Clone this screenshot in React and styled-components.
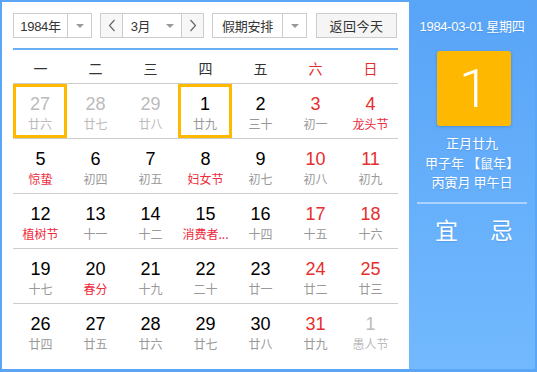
import React from 'react';
import styled, { createGlobalStyle } from 'styled-components';

const GlobalStyle = createGlobalStyle`
	body {
		margin: 0;
		font-family: 'Liberation Sans', 'Noto Sans CJK SC', sans-serif;
	}
`;

const Frame = styled.div`
	display: flex;
	width: 537px;
	height: 372px;
	box-sizing: border-box;
	border: 2px solid #5aa5f6;
	border-bottom-width: 3px;
`;

const Main = styled.div`
	width: 407px;
	padding: 11px 11px 0;
	box-sizing: border-box;
	background: #fff;
`;

const Toolbar = styled.div`
	display: flex;
	height: 25px;
	font-family: 'Noto Sans CJK SC', sans-serif;
	font-size: 13px;
	color: #333;
`;

const Select = styled.div`
	display: flex;
	width: ${(p) => p.width}px;
	margin-right: ${(p) => p.gap || 0}px;
	box-sizing: border-box;
	border: 1px solid #ccc;
	background: #fff;
`;

const SelectLabel = styled.div`
	flex: 1;
	display: flex;
	align-items: center;
	justify-content: center;
	font-family: 'Liberation Sans', 'Noto Sans CJK SC', sans-serif;
	letter-spacing: -0.3px;
`;

const Caret = styled.div`
	width: 23px;
	display: flex;
	align-items: center;
	justify-content: center;
	border-left: ${(p) => (p.divided ? '1px solid #ccc' : 'none')};
	&::after {
		content: '';
		border-left: 4px solid transparent;
		border-right: 4px solid transparent;
		border-top: 4px solid #999;
	}
`;

const Arrow = styled.div`
	width: 21px;
	display: flex;
	align-items: center;
	justify-content: center;
	background: #f7f7f7;
	border-${(p) => (p.side === 'left' ? 'right' : 'left')}: 1px solid #ccc;
`;

const Button = styled.div`
	width: 81px;
	box-sizing: border-box;
	border: 1px solid #ccc;
	background: #f5f5f5;
	display: flex;
	align-items: center;
	justify-content: center;
	letter-spacing: 0.5px;
`;

const Rule = styled.div`
	height: 2px;
	margin-top: 10px;
	background: #6aaef5;
`;

const WeekRow = styled.div`
	display: grid;
	grid-template-columns: repeat(7, 55px);
	height: 33px;
	align-items: center;
	font-family: 'Noto Sans CJK SC', sans-serif;
	font-size: 14px;
`;

const WeekDay = styled.div`
	text-align: center;
	color: ${(p) => (p.weekend ? '#e62e2e' : '#333')};
	padding-top: 2px;
`;

const Row = styled.div`
	display: grid;
	grid-template-columns: repeat(7, 55px);
	height: 55px;
	box-sizing: border-box;
	border-top: 1px solid #ccc;
`;

const Cell = styled.div`
	display: flex;
	flex-direction: column;
	align-items: center;
	padding-top: 10px;
	box-sizing: border-box;
	box-shadow: ${(p) => (p.marked ? 'inset 0 0 0 3px #ffb900' : 'none')};
	margin-right: ${(p) => (p.marked ? 1 : 0)}px;
`;

const DayNum = styled.div`
	font-size: 18px;
	line-height: 21px;
	color: ${(p) => (p.other ? '#bbb' : p.red ? '#e62e2e' : '#000')};
`;

const Lunar = styled.div`
	font-family: 'Noto Sans CJK SC', sans-serif;
	font-size: 12px;
	line-height: 16px;
	margin-top: 1px;
	white-space: nowrap;
	color: ${(p) => (p.other ? '#bbb' : p.fest ? '#ee2a3c' : '#999')};
`;

const Side = styled.div`
	flex: 1;
	display: flex;
	flex-direction: column;
	align-items: center;
	background: linear-gradient(#58a4f7, #72b9fe);
	color: #fff;
	font-family: 'Noto Sans CJK SC', sans-serif;
	text-shadow: 0 1px 1px rgba(40, 100, 180, 0.25);
`;

const DateLine = styled.div`
	margin-top: 16px;
	font-size: 13px;
	line-height: 18px;
	font-family: 'Liberation Sans', 'Noto Sans CJK SC', sans-serif;
	letter-spacing: -0.3px;
`;

const DayCard = styled.div`
	width: 74px;
	height: 75px;
	margin: 15px 0 0 4px;
	border-radius: 3px;
	background: #ffb800;
	box-shadow: 0 1px 3px rgba(30, 80, 150, 0.3);
	display: flex;
	align-items: center;
	justify-content: center;
	font-family: Roboto, 'Liberation Sans', sans-serif;
	font-weight: 300;
	font-size: 54px;
	text-shadow: none;
`;

const Info = styled.div`
	margin-top: 7px;
	font-size: 13px;
	line-height: 19.5px;
	text-align: center;
`;

const Divider = styled.div`
	width: 110px;
	height: 2px;
	margin-top: 10px;
	background: rgba(255, 255, 255, 0.45);
`;

const Advice = styled.div`
	display: flex;
	gap: 32px;
	margin-top: 11px;
	margin-left: 4px;
	font-size: 23px;
	line-height: 28px;
`;

const Chevron = ({ dir }) => (
	<svg width="8" height="13" viewBox="0 0 8 13">
		<polyline
			points={dir === 'left' ? '6.5,1 1.5,6.5 6.5,12' : '1.5,1 6.5,6.5 1.5,12'}
			fill="none"
			stroke="#666"
			strokeWidth="1.2"
		/>
	</svg>
);

const weekdays = ['一', '二', '三', '四', '五', '六', '日'];

const rows = [
	[
		{ d: 27, l: '廿六', other: true, marked: true },
		{ d: 28, l: '廿七', other: true },
		{ d: 29, l: '廿八', other: true },
		{ d: 1, l: '廿九', marked: true },
		{ d: 2, l: '三十' },
		{ d: 3, l: '初一' },
		{ d: 4, l: '龙头节', fest: true },
	],
	[
		{ d: 5, l: '惊蛰', fest: true },
		{ d: 6, l: '初四' },
		{ d: 7, l: '初五' },
		{ d: 8, l: '妇女节', fest: true },
		{ d: 9, l: '初七' },
		{ d: 10, l: '初八' },
		{ d: 11, l: '初九' },
	],
	[
		{ d: 12, l: '植树节', fest: true },
		{ d: 13, l: '十一' },
		{ d: 14, l: '十二' },
		{ d: 15, l: '消费者...', fest: true },
		{ d: 16, l: '十四' },
		{ d: 17, l: '十五' },
		{ d: 18, l: '十六' },
	],
	[
		{ d: 19, l: '十七' },
		{ d: 20, l: '春分', fest: true },
		{ d: 21, l: '十九' },
		{ d: 22, l: '二十' },
		{ d: 23, l: '廿一' },
		{ d: 24, l: '廿二' },
		{ d: 25, l: '廿三' },
	],
	[
		{ d: 26, l: '廿四' },
		{ d: 27, l: '廿五' },
		{ d: 28, l: '廿六' },
		{ d: 29, l: '廿七' },
		{ d: 30, l: '廿八' },
		{ d: 31, l: '廿九' },
		{ d: 1, l: '愚人节', other: true },
	],
];

const App = () => {
	return (
		<>
			<GlobalStyle />
			<Frame>
				<Main>
					<Toolbar>
						<Select width={79} gap={8}>
							<SelectLabel>1984年</SelectLabel>
							<Caret divided />
						</Select>
						<Select width={104} gap={8}>
							<Arrow side="left">
								<Chevron dir="left" />
							</Arrow>
							<SelectLabel>3月</SelectLabel>
							<Caret />
							<Arrow side="right">
								<Chevron dir="right" />
							</Arrow>
						</Select>
						<Select width={95} gap={9}>
							<SelectLabel>假期安排</SelectLabel>
							<Caret divided />
						</Select>
						<Button>返回今天</Button>
					</Toolbar>
					<Rule />
					<WeekRow>
						{weekdays.map((w, i) => (
							<WeekDay key={w} weekend={i > 4}>
								{w}
							</WeekDay>
						))}
					</WeekRow>
					{rows.map((row, r) => (
						<Row key={r}>
							{row.map((c, i) => (
								<Cell key={i} marked={c.marked}>
									<DayNum other={c.other} red={i > 4}>
										{c.d}
									</DayNum>
									<Lunar other={c.other} fest={c.fest}>
										{c.l}
									</Lunar>
								</Cell>
							))}
						</Row>
					))}
				</Main>
				<Side>
					<DateLine>1984-03-01 星期四</DateLine>
					<DayCard>1</DayCard>
					<Info>
						正月廿九
						<br />
						甲子年 【鼠年】
						<br />
						丙寅月 甲午日
					</Info>
					<Divider />
					<Advice>
						<span>宜</span>
						<span>忌</span>
					</Advice>
				</Side>
			</Frame>
		</>
	);
};

export default App;
